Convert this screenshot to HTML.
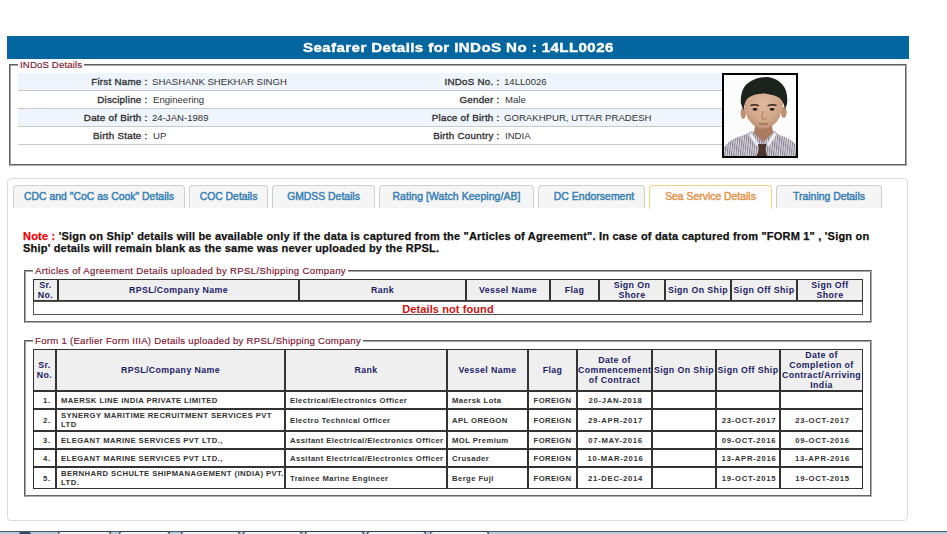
<!DOCTYPE html>
<html><head><meta charset="utf-8">
<style>
html,body{margin:0;padding:0;background:#fff;width:947px;height:534px;overflow:hidden;position:relative;font-family:"Liberation Sans",sans-serif;}
.abs{position:absolute;}
#hdr{left:7px;top:36px;width:902px;height:23px;background:#03669f;color:#fff;font-weight:bold;font-size:14px;line-height:23px;}
#hdr span{position:absolute;left:296px;top:0px;white-space:nowrap;-webkit-text-stroke-width:0.4px;font-size:13.6px;letter-spacing:0.37px;transform:scaleX(1.11);transform-origin:0 50%;}
.fs{position:absolute;box-sizing:border-box;border:1px solid;border-color:#5e5e5e #acacac #acacac #5e5e5e;box-shadow:inset 1px 1px 0 #a4a4a4,inset -1px -1px 0 #646464;}
.legend{position:absolute;background:#fff;color:#7e1430;font-size:9.6px;-webkit-text-stroke-width:0.15px;letter-spacing:0.3px;white-space:nowrap;padding:0 2px;line-height:12px;}
.row{position:absolute;left:18px;width:704px;height:17px;border-bottom:1px solid #c9c9c9;}
.row.alt{background:#eff5fc;}
.lbl{position:absolute;font-weight:normal;-webkit-text-stroke-width:0.35px;font-size:9.8px;letter-spacing:0.25px;color:#333;white-space:nowrap;text-align:right;top:3px;line-height:12px;}
.val{position:absolute;font-size:9.6px;color:#333;white-space:nowrap;top:3px;line-height:12px;}
#photo{left:722px;top:73px;width:72px;height:81px;border:2px solid #000;background:#fff;overflow:hidden;}
#panel{left:7px;top:178px;width:899px;height:341px;border:1px solid #dcdcdc;border-radius:4px;}
.tab{position:absolute;top:185px;height:23px;border:1px solid #cfcfcf;border-bottom:none;border-radius:4px 4px 0 0;background:#f5f5f5;color:#3580b6;font-weight:normal;font-size:10.4px;-webkit-text-stroke-width:0.45px;line-height:22px;text-align:center;white-space:nowrap;box-sizing:border-box;}
.tab.act{background:#fff;border-color:#f2d184;color:#e4934b;height:24px;}
#note{left:23px;top:230px;width:880px;font-weight:bold;font-size:11px;letter-spacing:0.2px;-webkit-text-stroke-width:0.25px;line-height:12px;color:#111;white-space:nowrap;}
#note b{color:#e00;}
table{border-collapse:separate;border-spacing:0;position:absolute;table-layout:fixed;}
th,td{border:1px solid #333;padding:0;overflow:hidden;}
th{background:#efefef;color:#1c1c66;font-weight:bold;font-size:8.8px;letter-spacing:0.4px;line-height:10px;text-align:center;}
td{color:#333;font-weight:bold;font-size:7.7px;letter-spacing:0.42px;line-height:9px;}
.nf{color:#cf1010;font-size:11px;text-align:center;letter-spacing:0.1px;padding:1px 0 0 0;line-height:11px;border-color:#555;}
.sr{text-align:right;padding-right:4px;letter-spacing:0.8px;}
.co,.rk,.vs{padding-left:4px;}
.fl,.dt{text-align:center;}
.dt{letter-spacing:0.72px;padding-left:2px;}
.tb{position:absolute;top:531px;height:3px;box-sizing:border-box;border:1px solid #3a3f46;border-bottom:none;border-radius:3px 3px 0 0;background:#eef3f8;}
</style></head><body>
<div id="hdr" class="abs"><span>Seafarer Details for INDoS No : 14LL0026</span></div>

<div class="fs" style="left:9px;top:64px;width:898px;height:102px;"></div>
<div class="legend" style="left:18px;top:59px;letter-spacing:0.15px">INDoS Details</div>

<div class="row alt" style="top:73px;"></div>
<div class="row" style="top:91px;"></div>
<div class="row alt" style="top:109px;"></div>
<div class="row" style="top:127px;"></div>

<div class="lbl" style="right:799.5px;top:76px;">First Name :</div>
<div class="val" style="left:152px;top:76px;">SHASHANK SHEKHAR SINGH</div>
<div class="lbl" style="right:799.5px;top:94px;">Discipline :</div>
<div class="val" style="left:153px;top:94px;">Engineering</div>
<div class="lbl" style="right:799.5px;top:112px;">Date of Birth :</div>
<div class="val" style="left:152px;top:112px;">24-JAN-1989</div>
<div class="lbl" style="right:799.5px;top:130px;">Birth State :</div>
<div class="val" style="left:153px;top:130px;">UP</div>

<div class="lbl" style="right:447.5px;top:76px;">INDoS No. :</div>
<div class="val" style="left:504px;top:76px;">14LL0026</div>
<div class="lbl" style="right:447.5px;top:94px;">Gender :</div>
<div class="val" style="left:505px;top:94px;">Male</div>
<div class="lbl" style="right:447.5px;top:112px;">Place of Birth :</div>
<div class="val" style="left:504px;top:112px;">GORAKHPUR, UTTAR PRADESH</div>
<div class="lbl" style="right:447.5px;top:130px;">Birth Country :</div>
<div class="val" style="left:505px;top:130px;">INDIA</div>

<div id="photo" class="abs"><svg width="72" height="81" viewBox="2 2 72 81" style="display:block">
<defs>
<pattern id="str" width="2.2" height="3" patternUnits="userSpaceOnUse" patternTransform="rotate(6)"><rect width="2.2" height="3" fill="#e2dfe6"/><rect width="1" height="3" fill="#7f7787"/><rect y="1.5" width="2.2" height="0.5" fill="#aaa3b2"/></pattern>
<filter id="bl" x="-5%" y="-5%" width="110%" height="110%"><feGaussianBlur stdDeviation="0.45"/></filter>
<radialGradient id="sk" cx="0.5" cy="0.38" r="0.65"><stop offset="0" stop-color="#dfb9a0"/><stop offset="0.65" stop-color="#d2a78a"/><stop offset="1" stop-color="#bb8d72"/></radialGradient>
</defs>
<rect x="0" y="0" width="76" height="85" fill="#fcfcfc"/>
<g filter="url(#bl)">
<path d="M1.5 85 L1.5 75 Q5 70 9.6 67 Q16 63.5 22.3 62 L29 58.5 L52.5 58 L57.5 62 Q63 63.5 68.5 67 Q72 69.5 75 73 L75 85 Z" fill="url(#str)"/>
<path d="M33.5 49 L49.5 49 L51 60 L41 69 L32 60 Z" fill="#a97b60"/>
<path d="M29 59 L37 71.5 L34.5 73.5 L27 62 Z M52.5 58.5 L44.5 71.5 L47 73.5 L54.5 62 Z" fill="#ebe9ed"/>
<path d="M36 71 L44.5 71 L43.5 76 L45.5 85 L34 85 L37 76 Z" fill="#4c342e"/>
<ellipse cx="21.3" cy="40" rx="2.6" ry="6" fill="#c08f72"/>
<ellipse cx="61.8" cy="39.3" rx="2.8" ry="5.6" fill="#c08f72"/>
<ellipse cx="41.5" cy="31" rx="19.5" ry="14" fill="#cfa286"/>
<path d="M23.5 27 Q22.5 43 28 48.5 Q34 56 41.4 55.8 Q48.5 56 55 48.5 Q60 43 59.8 27 Q59 15 41.5 15 Q24 15 23.5 27 Z" fill="url(#sk)"/>
<path d="M18.8 30 C18.5 21 21 13 26.3 10 C30 6.5 38 4 44.6 4 C52 4.5 58 8 61.3 12.7 C64.5 17 65.8 23 65 31 L63 36 C62 31 60.5 28 58.2 25.5 C56 23 50 21.5 43 20.4 C37 20.5 31 21 25.5 25.5 C23.5 27.5 22.3 31 21.5 37.4 Z" fill="#1b201f"/>
<path d="M28.5 32.5 Q33 31 37 32.8" stroke="#33241d" stroke-width="1.4" fill="none"/>
<path d="M45.5 32.8 Q50 31 54.5 32.5" stroke="#33241d" stroke-width="1.4" fill="none"/>
<ellipse cx="33" cy="36.3" rx="2.5" ry="1.4" fill="#261a15"/>
<ellipse cx="50" cy="36.3" rx="2.5" ry="1.4" fill="#261a15"/>
<path d="M41 38 L40 45.5 Q41.5 47.5 44.5 45.5" stroke="#b07f64" stroke-width="1" fill="none"/>
<path d="M37 50.5 Q41.5 51.8 46 50.5" stroke="#98604e" stroke-width="1.2" fill="none"/>
</g></svg></div>

<div id="panel" class="abs"></div>
<div class="tab" style="left:13px;width:172px;letter-spacing:0.02px">CDC and "CoC as Cook" Details</div>
<div class="tab" style="left:189px;width:79px;">COC Details</div>
<div class="tab" style="left:272px;width:103px;">GMDSS Details</div>
<div class="tab" style="left:379px;width:155px;letter-spacing:0.1px">Rating [Watch Keeping/AB]</div>
<div class="tab" style="left:538px;width:107px;padding-left:5px;letter-spacing:0.05px">DC Endorsement</div>
<div class="tab act" style="left:649px;width:123px;">Sea Service Details</div>
<div class="tab" style="left:776px;width:106px;">Training Details</div>

<div id="note" class="abs"><b>Note :</b> 'Sign on Ship' details will be available only if the data is captured from the "Articles of Agreement". In case of data captured from "FORM 1" , 'Sign on<br>Ship' details will remain blank as the same was never uploaded by the RPSL.</div>

<div class="fs" style="left:24px;top:270px;width:848px;height:53px;"></div>
<div class="legend" style="left:33px;top:265px;letter-spacing:0.34px">Articles of Agreement Details uploaded by RPSL/Shipping Company</div>

<div class="fs" style="left:24px;top:340px;width:848px;height:157px;"></div>
<div class="legend" style="left:33px;top:335px;letter-spacing:0.27px">Form 1 (Earlier Form IIIA) Details uploaded by RPSL/Shipping Company</div>

<table style="left:33px;top:279px;width:830px;"><colgroup><col style="width:25px"><col style="width:241px"><col style="width:167px"><col style="width:84px"><col style="width:49px"><col style="width:66px"><col style="width:66px"><col style="width:66px"><col style="width:66px"></colgroup><tr><th style="width:23px;height:20px">Sr.<br>No.</th><th style="width:239px;height:20px">RPSL/Company Name</th><th style="width:165px;height:20px">Rank</th><th style="width:82px;height:20px">Vessel Name</th><th style="width:47px;height:20px">Flag</th><th style="width:64px;height:20px">Sign On<br>Shore</th><th style="width:64px;height:20px">Sign On Ship</th><th style="width:64px;height:20px">Sign Off Ship</th><th style="width:64px;height:20px">Sign Off<br>Shore</th></tr><tr><td colspan="9" class="nf" style="height:11px"><span style="position:relative;top:1px">Details not found</span></td></tr></table>
<table class="f1" style="left:33px;top:349px;width:830px;"><colgroup><col style="width:23px"><col style="width:229px"><col style="width:162px"><col style="width:81px"><col style="width:49px"><col style="width:75px"><col style="width:64px"><col style="width:64px"><col style="width:83px"></colgroup><tr><th style="width:21px;height:40px">Sr.<br>No.</th><th style="width:227px;height:40px">RPSL/Company Name</th><th style="width:160px;height:40px">Rank</th><th style="width:79px;height:40px">Vessel Name</th><th style="width:47px;height:40px">Flag</th><th style="width:73px;height:40px">Date of<br>Commencement<br>of Contract</th><th style="width:62px;height:40px">Sign On Ship</th><th style="width:62px;height:40px">Sign Off Ship</th><th style="width:81px;height:40px">Date of<br>Completion of<br>Contract/Arriving<br>India</th></tr><tr><td class="sr" style="height:16px">1.</td><td class="co" style="height:16px">MAERSK LINE INDIA PRIVATE LIMITED</td><td class="rk" style="height:16px">Electrical/Electronics Officer</td><td class="vs" style="height:16px">Maersk Lota</td><td class="fl" style="height:16px">FOREIGN</td><td class="dt" style="height:16px">20-JAN-2018</td><td class="dt" style="height:16px"></td><td class="dt" style="height:16px"></td><td class="dt" style="height:16px"></td></tr><tr><td class="sr" style="height:20px">2.</td><td class="co" style="height:20px">SYNERGY MARITIME RECRUITMENT SERVICES PVT LTD</td><td class="rk" style="height:20px">Electro Technical Officer</td><td class="vs" style="height:20px">APL OREGON</td><td class="fl" style="height:20px">FOREIGN</td><td class="dt" style="height:20px">29-APR-2017</td><td class="dt" style="height:20px"></td><td class="dt" style="height:20px">23-OCT-2017</td><td class="dt" style="height:20px">23-OCT-2017</td></tr><tr><td class="sr" style="height:16px">3.</td><td class="co" style="height:16px">ELEGANT MARINE SERVICES PVT LTD.,</td><td class="rk" style="height:16px">Assitant Electrical/Electronics Officer</td><td class="vs" style="height:16px">MOL Premium</td><td class="fl" style="height:16px">FOREIGN</td><td class="dt" style="height:16px">07-MAY-2016</td><td class="dt" style="height:16px"></td><td class="dt" style="height:16px">09-OCT-2016</td><td class="dt" style="height:16px">09-OCT-2016</td></tr><tr><td class="sr" style="height:16px">4.</td><td class="co" style="height:16px">ELEGANT MARINE SERVICES PVT LTD.,</td><td class="rk" style="height:16px">Assitant Electrical/Electronics Officer</td><td class="vs" style="height:16px">Crusader</td><td class="fl" style="height:16px">FOREIGN</td><td class="dt" style="height:16px">10-MAR-2016</td><td class="dt" style="height:16px"></td><td class="dt" style="height:16px">13-APR-2016</td><td class="dt" style="height:16px">13-APR-2016</td></tr><tr><td class="sr" style="height:20px">5.</td><td class="co" style="height:20px"><span style="white-space:nowrap">BERNHARD SCHULTE SHIPMANAGEMENT (INDIA) PVT.</span><br>LTD.</td><td class="rk" style="height:20px">Trainee Marine Engineer</td><td class="vs" style="height:20px">Berge Fuji</td><td class="fl" style="height:20px">FOREIGN</td><td class="dt" style="height:20px">21-DEC-2014</td><td class="dt" style="height:20px"></td><td class="dt" style="height:20px">19-OCT-2015</td><td class="dt" style="height:20px">19-OCT-2015</td></tr></table>
<div class="abs" style="left:0;top:531px;width:947px;height:3px;background:#b9cbe0;border-top:1px solid #4b5866;box-sizing:border-box;"></div>
<div class="abs" style="left:19px;top:532px;width:12px;height:2px;background:#2d4d70;border-radius:6px 6px 0 0;"></div>
<div class="tb" style="left:58px;width:53px;"></div>
<div class="tb" style="left:119px;width:51px;"></div>
<div class="tb" style="left:181px;width:59px;"></div>
<div class="tb" style="left:243px;width:59px;"></div>
<div class="tb" style="left:305px;width:59px;"></div>
<div class="tb" style="left:367px;width:59px;"></div>
<div class="tb" style="left:430px;width:59px;"></div>
</body></html>
